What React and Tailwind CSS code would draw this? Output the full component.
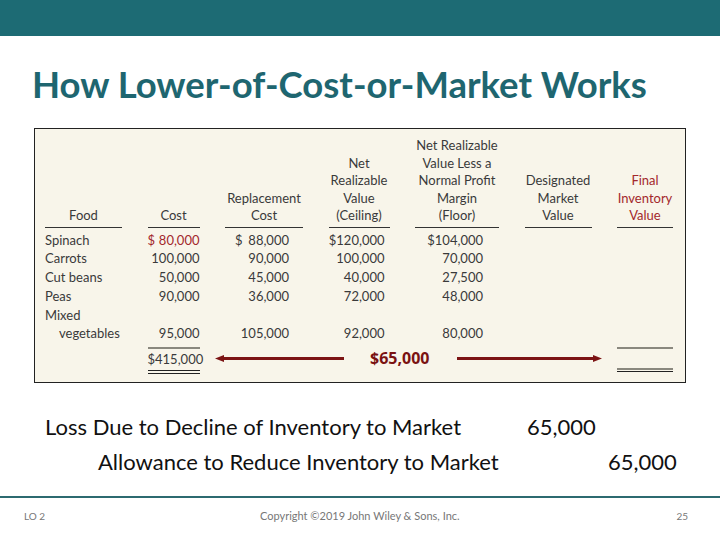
import React from "react";

const rows = [
  ["Spinach", "$ 80,000", "$  88,000", "$120,000", "$104,000"],
  ["Carrots", "100,000", "90,000", "100,000", "70,000"],
  ["Cut beans", "50,000", "45,000", "40,000", "27,500"],
  ["Peas", "90,000", "36,000", "72,000", "48,000"],
];

function Head({ dir }) {
  return (
    <svg width="9" height="9" viewBox="0 0 9 9" className="block shrink-0">
      {dir === "left" ? (
        <polygon points="0,4.5 9,1 9,8" fill="#7c1414" />
      ) : (
        <polygon points="9,4.5 0,1 0,8" fill="#7c1414" />
      )}
    </svg>
  );
}

export default function App() {
  const hdr = "flex flex-col justify-end items-center text-center border-b border-[#333] pb-[2px] leading-[17.5px]";
  const num = "text-right";
  const cols = "grid grid-cols-[77px_52px_78px_61px_84px_67px_56px] gap-x-[25.5px]";
  return (
    <div className="w-[720px] h-[540px] bg-white relative overflow-hidden" style={{ fontFamily: "Lato, 'Liberation Sans', sans-serif" }}>
      <div className="h-[36px] bg-[#1d6b74]" />

      <h1 className="ml-[32px] mt-[25px] text-[36.5px] font-bold text-[#1e6670] leading-[46px]">
        How Lower-of-Cost-or-Market Works
      </h1>

      <div className="ml-[34px] mt-[21px] w-[652px] h-[255px] border border-[#222] bg-[#f8f5ea] pl-[10px] pt-[8px] text-[13px] text-[#3a3a3a]">
        <div className={cols}>
          <div className={hdr}>Food</div>
          <div className={hdr}>Cost</div>
          <div className={hdr}>Replacement<br />Cost</div>
          <div className={hdr}>Net<br />Realizable<br />Value<br />(Ceiling)</div>
          <div className={hdr}>Net Realizable<br />Value Less a<br />Normal Profit<br />Margin<br />(Floor)</div>
          <div className={hdr}>Designated<br />Market<br />Value</div>
          <div className={hdr + " text-[#a3282c]"}>Final<br />Inventory<br />Value</div>
        </div>

        <div className={cols + " pt-[3px] leading-[18.8px]"}>
          {rows.map((r, i) => (
            <React.Fragment key={i}>
              <div>{r[0]}</div>
              <div className={num + (i === 0 ? " text-[#a3282c] flex justify-between" : "")}>
                {i === 0 ? (<><span>$</span><span>80,000</span></>) : r[1]}
              </div>
              <div className={num + " pr-[14px]" + (i === 0 ? " flex justify-between pl-[10px]" : "")}>
                {i === 0 ? (<><span>$</span><span>88,000</span></>) : r[2]}
              </div>
              <div className={num + " pr-[5px]"}>{r[3]}</div>
              <div className={num + " pr-[16px]"}>{r[4]}</div>
              <div />
              <div />
            </React.Fragment>
          ))}
          <div>Mixed</div>
          <div /><div /><div /><div /><div /><div />
          <div className="pl-[14px]">vegetables</div>
          <div className={num}>95,000</div>
          <div className={num + " pr-[14px]"}>105,000</div>
          <div className={num + " pr-[5px]"}>92,000</div>
          <div className={num + " pr-[16px]"}>80,000</div>
          <div /><div />
        </div>

        <div className={cols + " mt-[4px]"}>
          <div />
          <div className="border-t-[2px] border-[#8a887e] pt-[1px]">
            <div className="text-right leading-[18px] pb-[2px] border-b border-[#222]">$415,000</div>
            <div className="mt-[2px] border-b border-[#222]" />
          </div>
          <div className="col-span-4 flex items-center ml-[-10px] mr-[-10px] h-[21px] mt-[1px]">
            <Head dir="left" />
            <div className="h-[3px] w-[120px] bg-[#7c1414]" />
            <div className="ml-[26px] mr-[28px] font-bold text-[16px] text-[#7a1212] leading-[21px]" style={{ fontFamily: "'Open Sans', sans-serif" }}>$65,000</div>
            <div className="h-[3px] flex-1 bg-[#7c1414]" />
            <Head dir="right" />
          </div>
          <div className="border-t-[2px] border-[#8a887e]">
            <div className="h-[19px]" />
            <div className="border-t-[2px] border-[#8a887e]" />
            <div className="mt-[1px] border-b border-[#222]" />
          </div>
        </div>
      </div>

      <div className="text-[22px] text-[#111] leading-[26px]">
        <div className="flex mt-[31px]">
          <span className="ml-[45px] w-[482px]">Loss Due to Decline of Inventory to Market</span>
          <span>65,000</span>
        </div>
        <div className="flex mt-[9px]">
          <span className="ml-[98px] w-[510px]">Allowance to Reduce Inventory to Market</span>
          <span>65,000</span>
        </div>
      </div>

      <div className="absolute left-0 right-0 top-[496px] h-[2px] bg-[#2c6a70]" />
      <div className="absolute left-0 right-0 top-[508px] flex items-center text-[10px] text-[#777]">
        <span className="ml-[24px] w-[236px]">LO 2</span>
        <span className="text-[11px]">Copyright ©2019 John Wiley &amp; Sons, Inc.</span>
        <span className="ml-auto mr-[32px]">25</span>
      </div>
    </div>
  );
}
